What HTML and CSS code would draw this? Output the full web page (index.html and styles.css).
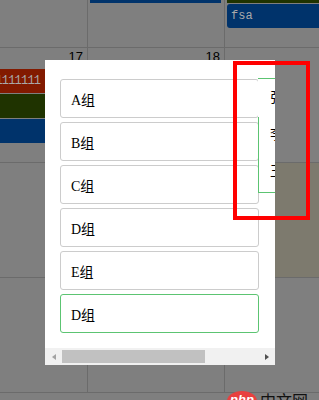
FILE: index.html
```html
<!DOCTYPE html>
<html lang="zh-CN">
<head>
    <meta charset="UTF-8">
    <meta name="viewport" content="width=device-width, initial-scale=1.0">
    <title>分组选择</title>
    <link rel="stylesheet" href="styles.css">
</head>
<body>
    <div class="calendar">
        <div class="cell"><div class="day"></div></div>
        <div class="cell">
            <div class="day"></div>
            <div class="event blue"></div>
            <div class="event blue"></div>
        </div>
        <div class="cell">
            <div class="day"></div>
            <div class="event blue"></div>
            <div class="event green"></div>
            <div class="event blue round">fsa</div>
        </div>

        <div class="cell">
            <div class="day">17</div>
            <div class="event red">1111111111111</div>
            <div class="event green"></div>
            <div class="event blue"></div>
        </div>
        <div class="cell"><div class="day">18</div></div>
        <div class="cell"><div class="day"></div></div>

        <div class="cell"><div class="day">24</div></div>
        <div class="cell"><div class="day">25</div></div>
        <div class="cell today"><div class="day"></div></div>

        <div class="cell"><div class="day">7</div></div>
        <div class="cell"><div class="day">8</div></div>
        <div class="cell"><div class="day"></div></div>
    </div>

    <div class="modal">
        <div class="modal-body">
            <div class="group-list">
                <div class="group">A组</div>
                <div class="group">B组</div>
                <div class="group">C组</div>
                <div class="group">D组</div>
                <div class="group">E组</div>
                <div class="group active">D组</div>
            </div>
            <!-- member dropdown of the hovered group -->
            <div class="member-pop">
                <div class="member">张三</div>
                <div class="member">李四</div>
                <div class="member">王五</div>
            </div>
        </div>
        <div class="hscroll">
            <div class="arrow arrow-left"></div>
            <div class="track"><div class="thumb"></div></div>
            <div class="arrow arrow-right"></div>
        </div>
    </div>

    <div class="highlight"></div>

    <div class="php-logo">
        <span class="php-badge">php</span>
        <span class="php-text">中文网</span>
    </div>
</body>
</html>
```

FILE: styles.css
```css
body {
    margin: 0;
    padding: 0;
    width: 319px;
    height: 400px;
    overflow: hidden;
    position: relative;
    background-color: #7f7f7f;
    font-family: 'Liberation Sans', 'Noto Sans CJK SC', sans-serif;
    color: #000;
}
.calendar {
    display: grid;
    grid-template-columns: repeat(3, 137px);
    grid-auto-rows: 115px;
    margin-top: -67px;
    margin-left: -49px;
}
.cell {
    display: flex;
    flex-direction: column;
    border-right: 1px solid #6b6b6b;
    border-bottom: 1px solid #6b6b6b;
    overflow: hidden;
}
.cell.today {
    background-color: #7d7a6e;
}
.day {
    height: 21px;
    line-height: 18px;
    padding-right: 4px;
    text-align: right;
    font-size: 13px;
    flex-shrink: 0;
}
.event {
    height: 24px;
    line-height: 24px;
    margin: 0 3px 1px 2px;
    padding-left: 4px;
    font-family: 'Liberation Mono', monospace;
    font-size: 12px;
    color: #a9a9a9;
    white-space: nowrap;
    overflow: hidden;
    flex-shrink: 0;
}
.event.red {
    background-color: #821a00;
    letter-spacing: -0.8px;
}
.event.green {
    background-color: #1f3300;
}
.event.blue {
    background-color: #00336b;
}
.event.round {
    border-radius: 3px;
}

.modal {
    position: absolute;
    left: 45px;
    top: 60px;
    width: 230px;
    background: #ffffff;
    display: flex;
    flex-direction: column;
}
.modal-body {
    position: relative;
    height: 288px;
    padding: 19px 15px 0;
    box-sizing: border-box;
    overflow: hidden;
}
.group-list {
    width: 199px;
    display: flex;
    flex-direction: column;
    gap: 4px;
}
.group {
    height: 39px;
    box-sizing: border-box;
    border: 1px solid #cccccc;
    border-radius: 3px;
    display: flex;
    align-items: center;
    padding-left: 10px;
    font-family: 'Liberation Serif', 'Noto Sans CJK SC', serif;
    font-size: 14px;
}
.group.active {
    border-color: #5cc472;
}
.member-pop {
    position: absolute;
    left: 213px;
    top: 18px;
    width: 120px;
    height: 115px;
    box-sizing: border-box;
    border: 1px solid #5cc472;
    border-left: none;
    background: #ffffff;
    padding-left: 12px;
}
.member-pop::before {
    content: '';
    position: absolute;
    left: 0;
    top: 38px;
    bottom: -1px;
    width: 1px;
    background: #5cc472;
}
.member {
    height: 37px;
    line-height: 37px;
    font-family: 'Liberation Serif', 'Noto Sans CJK SC', serif;
    font-size: 14px;
    white-space: nowrap;
}

.hscroll {
    display: flex;
    height: 17px;
    background-color: #f1f1f1;
}
.arrow {
    width: 17px;
    display: flex;
    align-items: center;
    justify-content: center;
}
.arrow::before {
    content: '';
    width: 0;
    height: 0;
    border-top: 3.5px solid transparent;
    border-bottom: 3.5px solid transparent;
}
.arrow-left::before {
    border-right: 4px solid #a3a3a3;
}
.arrow-right::before {
    border-left: 4px solid #505050;
}
.track {
    flex: 1;
    padding: 2px 0;
}
.thumb {
    width: 143px;
    height: 13px;
    background-color: #c1c1c1;
}

.highlight {
    position: absolute;
    left: 233px;
    top: 61px;
    width: 77px;
    height: 159px;
    box-sizing: border-box;
    border: 4px solid #ff0000;
}

.php-logo {
    position: absolute;
    left: 227px;
    top: 391px;
    display: flex;
    align-items: flex-start;
    gap: 3px;
}
.php-badge {
    width: 30px;
    height: 20px;
    border-radius: 50%;
    background-color: #e8403f;
    color: #ffffff;
    font-family: 'Liberation Sans', sans-serif;
    font-weight: bold;
    font-style: italic;
    font-size: 13px;
    line-height: 18px;
    text-align: center;
}
.php-text {
    font-family: 'Noto Sans CJK SC', sans-serif;
    font-size: 16px;
    line-height: 18px;
    color: #111111;
}
```
